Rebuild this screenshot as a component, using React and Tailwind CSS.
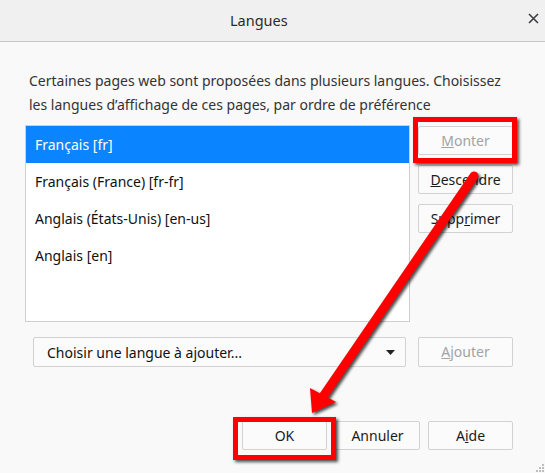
import React from 'react';

const font = { fontFamily: '"Noto Sans", "Open Sans", sans-serif' };

const Btn = ({ children, disabled, className = '' }) => (
  <button
    className={`h-[29px] border border-[#d2d2d2] rounded-[2px] bg-[#fbfbfb] text-[14px] leading-none ${disabled ? 'text-[#a3a3a3]' : 'text-[#1a1a1a]'} ${className}`}
  >
    {children}
  </button>
);

const langues = [
  'Français [fr]',
  'Français (France) [fr-fr]',
  'Anglais (États-Unis) [en-us]',
  'Anglais [en]',
];

const App = () => {
  return (
    <div className="relative w-[545px] h-[473px] bg-[#f9f9f9] flex flex-col overflow-hidden" style={font}>
      {/* barre de titre */}
      <div className="relative h-[42px] shrink-0 bg-[#f0f0f0] border-b border-[#c6c6c6] flex items-center">
        <span className="ml-[230px] text-[14.5px] text-[#2b2b2b]">Langues</span>
        <svg className="absolute left-[528px] top-[13px]" width="11" height="11" viewBox="0 0 11 11">
          <path d="M1 1 L10 10 M10 1 L1 10" stroke="#3b3f44" strokeWidth="1.6" />
        </svg>
      </div>

      <div className="flex flex-col pl-[25px] pt-[27px]">
        <p className="pl-1 text-[14px] leading-[24px] text-[#333]">
          Certaines pages web sont proposées dans plusieurs langues. Choisissez
          <br />
          les langues d’affichage de ces pages, par ordre de préférence
        </p>

        <div className="flex mt-2">
          <div className="w-[385px] h-[197px] bg-white border border-[#cfcfcf] flex flex-col">
            {langues.map((l, i) => (
              <div
                key={l}
                className={`h-[37px] flex items-center pl-[9px] text-[14px] ${i === 0 ? 'bg-[#0a84ff] text-white' : 'text-[#111]'}`}
              >
                {l}
              </div>
            ))}
          </div>
          <div className="flex flex-col gap-[10px] ml-[8px] pt-px">
            <Btn disabled className="w-[95px]"><span className="underline">M</span>onter</Btn>
            <Btn className="w-[95px]"><span className="underline">D</span>escendre</Btn>
            <Btn className="w-[95px]">Supp<span className="underline">r</span>imer</Btn>
          </div>
        </div>

        <div className="flex mt-[15px] ml-2">
          <div className="w-[373px] h-[30px] bg-[#fbfbfb] border border-[#d2d2d2] rounded-[2px] flex items-center justify-between pl-[13px] pr-[10px] text-[14px] text-[#111]">
            <span>Choisir une langue à ajouter...</span>
            <svg width="9" height="5" viewBox="0 0 9 5">
              <path d="M0 0 H9 L4.5 5 Z" fill="#222" />
            </svg>
          </div>
          <Btn disabled className="w-[95px] h-[30px] ml-3"><span className="underline">A</span>jouter</Btn>
        </div>
      </div>

      <div className="flex justify-end gap-2 pr-[32px] mt-[54px]">
        <Btn className="w-[85px] h-[28px]">OK</Btn>
        <Btn className="w-[85px] h-[28px]">Annuler</Btn>
        <Btn className="w-[85px] h-[28px]">A<span className="underline">i</span>de</Btn>
      </div>

      {/* poignée de redimensionnement */}
      <svg className="absolute right-0 bottom-0" width="12" height="12" viewBox="0 0 12 12">
        <rect x="9" y="3" width="2" height="2" fill="#bdbdbd" />
        <rect x="6" y="6" width="2" height="2" fill="#bdbdbd" />
        <rect x="9" y="6" width="2" height="2" fill="#bdbdbd" />
        <rect x="3" y="9" width="2" height="2" fill="#bdbdbd" />
        <rect x="6" y="9" width="2" height="2" fill="#bdbdbd" />
        <rect x="9" y="9" width="2" height="2" fill="#bdbdbd" />
      </svg>

      {/* annotations rouges */}
      <div className="absolute left-[413px] top-[117px] w-[104px] h-[46px] border-[5px] border-[#ff0000] shadow-[2px_2px_3px_rgba(0,0,0,0.7)]" />
      <div className="absolute left-[233px] top-[417px] w-[103px] h-[43px] border-[5px] border-[#ff0000] shadow-[2px_2px_3px_rgba(0,0,0,0.7)]" />
      <svg className="absolute left-0 top-0 pointer-events-none drop-shadow-[2px_2px_1.5px_rgba(0,0,0,0.7)]" width="545" height="473" viewBox="0 0 545 473">
        <line x1="474" y1="176" x2="322" y2="398" stroke="#ff0000" strokeWidth="9" strokeLinecap="round" />
        <polygon points="312,413 310,388 336,402" fill="#ff0000" />
      </svg>
    </div>
  );
};

export default App;
